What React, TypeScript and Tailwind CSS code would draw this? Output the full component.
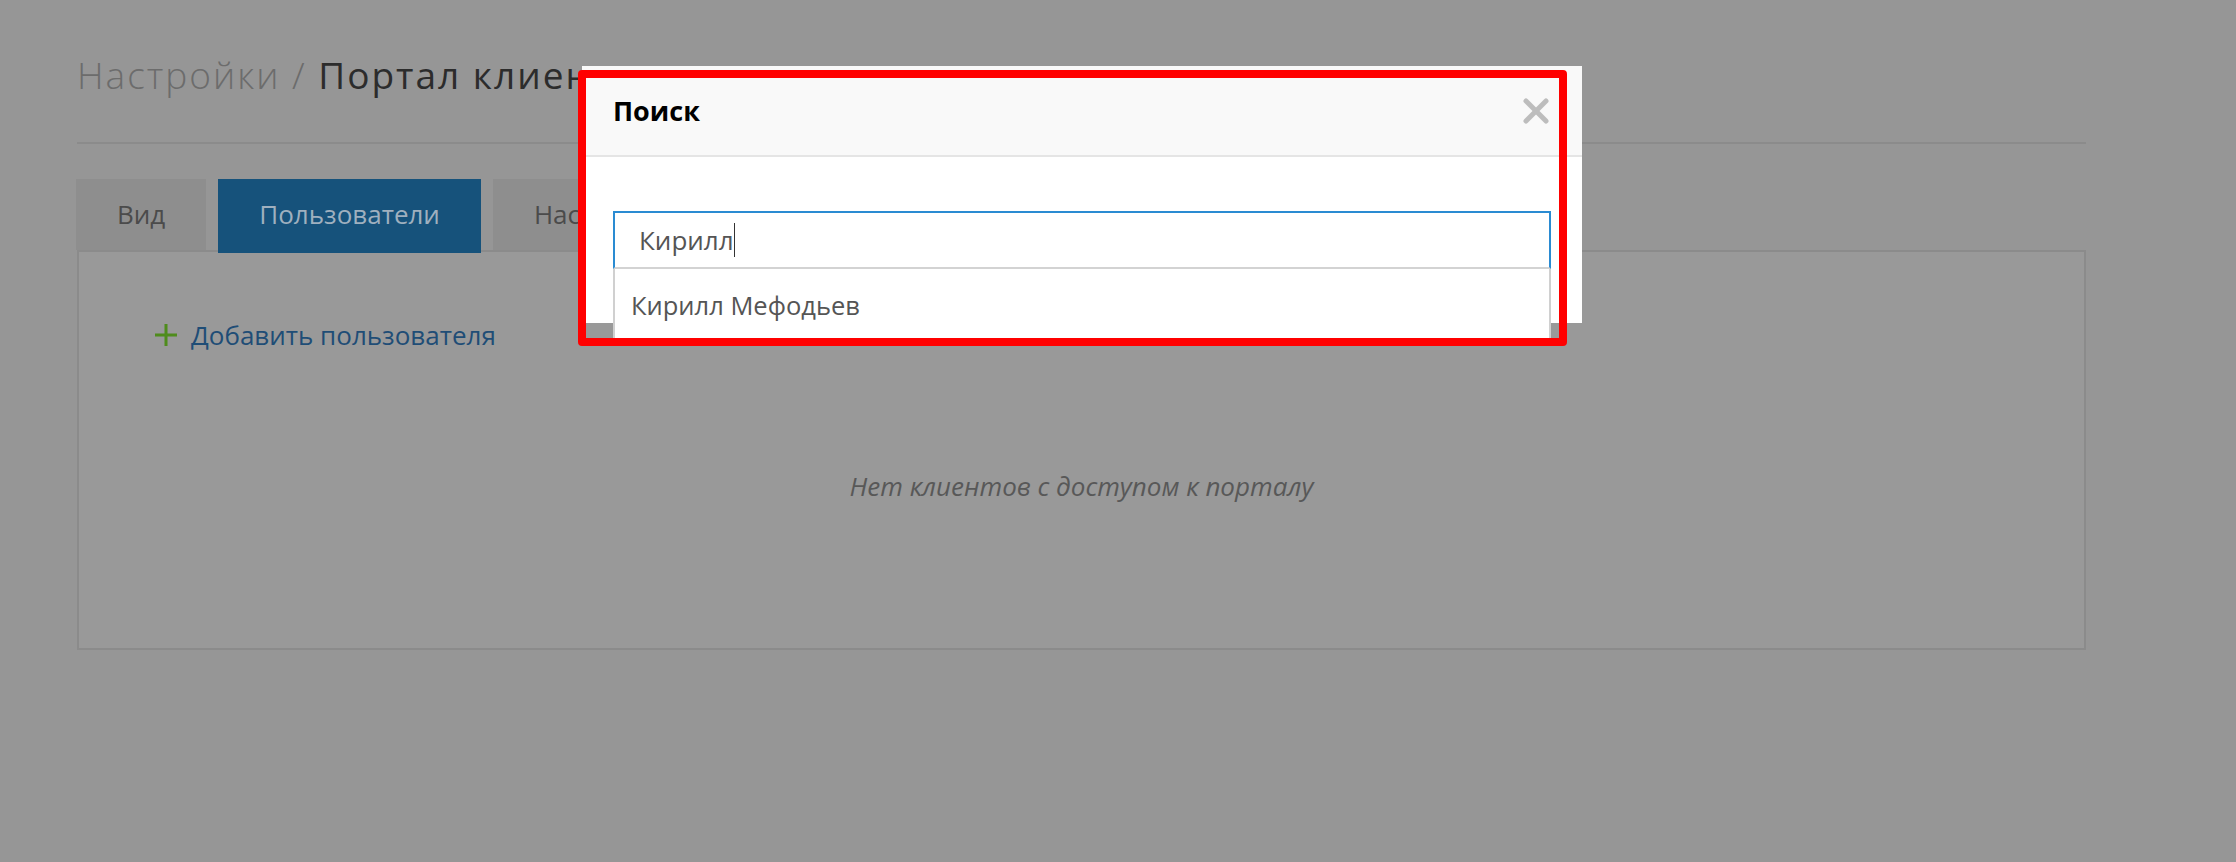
import React from "react";

export default function App() {
  return (
    <div
      className="relative w-[2236px] h-[862px] overflow-hidden bg-[#969696]"
      style={{ fontFamily: '"Open Sans", "Noto Sans", sans-serif' }}
    >
      <div className="ml-[77px] w-[2009px]">
        <div className="pt-[57px] text-[37px] leading-[36px] tracking-[2px] whitespace-nowrap">
          <span className="font-light text-[#6c6c6c]">Настройки / </span>
          <span className="font-normal text-[#2c2c2c]">Портал клиентов</span>
        </div>
        <div className="mt-[49px] h-[2px] bg-[#8b8b8b]" />

        <div className="mt-[35px] flex h-[71px] items-start gap-[12px] -ml-px">
          <div className="flex h-[71px] items-center bg-[#8e8e8e] px-[41px] text-[26px] text-[#4b4b4b]">
            Вид
          </div>
          <div className="relative z-10 flex h-[74px] items-center bg-[#16527b] px-[41px] pb-[3px] text-[26px] text-[#9fb0bf]">
            Пользователи
          </div>
          <div className="flex h-[71px] items-center bg-[#8e8e8e] px-[41px] text-[26px] text-[#4b4b4b]">
            Настройки
          </div>
        </div>

        <div className="border-2 border-[#8b8b8b] bg-[#999999] pt-[65px] pb-[144px]">
          <div className="flex items-center pl-[76px] h-[36px]">
            <svg width="22" height="22" viewBox="0 0 22 22" className="mr-[14px]">
              <rect x="9.5" y="0" width="3" height="22" fill="#4f8c1c" />
              <rect x="0" y="9.5" width="22" height="3" fill="#4f8c1c" />
            </svg>
            <span className="text-[26px] leading-[36px] text-[#1f4d76]">Добавить пользователя</span>
          </div>
          <div className="mt-[115px] text-center text-[26px] leading-[36px] italic text-[#585858]">
            Нет клиентов с доступом к порталу
          </div>
        </div>
      </div>

      {/* Modal */}
      <div className="absolute left-[582px] top-[66px] w-[1000px] h-[257px] bg-white">
        <div className="flex h-[91px] items-center justify-between border-b-2 border-[#e5e5e5] bg-[#f9f9f9] pl-[31px] pr-[33px]">
          <span className="text-[27px] font-bold text-black pt-[2px]">Поиск</span>
          <svg width="26" height="26" viewBox="0 0 26 26">
            <line x1="3" y1="3" x2="23" y2="23" stroke="#bdbdbd" strokeWidth="5" strokeLinecap="round" />
            <line x1="23" y1="3" x2="3" y2="23" stroke="#bdbdbd" strokeWidth="5" strokeLinecap="round" />
          </svg>
        </div>
        <div className="px-[31px] pt-[54px]">
          <div className="relative">
            <div className="flex h-[58px] items-center border-x-2 border-t-2 border-b-2 border-[#2a8bd2] border-b-[#d3d3d3] pl-[24px]">
              <span className="text-[26px] text-[#555555]">Кирилл</span>
              <span className="inline-block w-[1.5px] h-[34px] bg-[#333333]" />
            </div>
            <div className="absolute left-0 right-0 top-full h-[76px] border-x-2 border-[#d0d0d0] bg-white pl-[16px] pt-[17px]">
              <span className="text-[25.5px] text-[#555555]">Кирилл Мефодьев</span>
            </div>
          </div>
        </div>
      </div>

      {/* Red highlight annotation */}
      <div className="pointer-events-none absolute left-[578px] top-[70px] w-[989px] h-[276px] rounded-[4px] border-[8px] border-[#ff0000]" />
    </div>
  );
}
